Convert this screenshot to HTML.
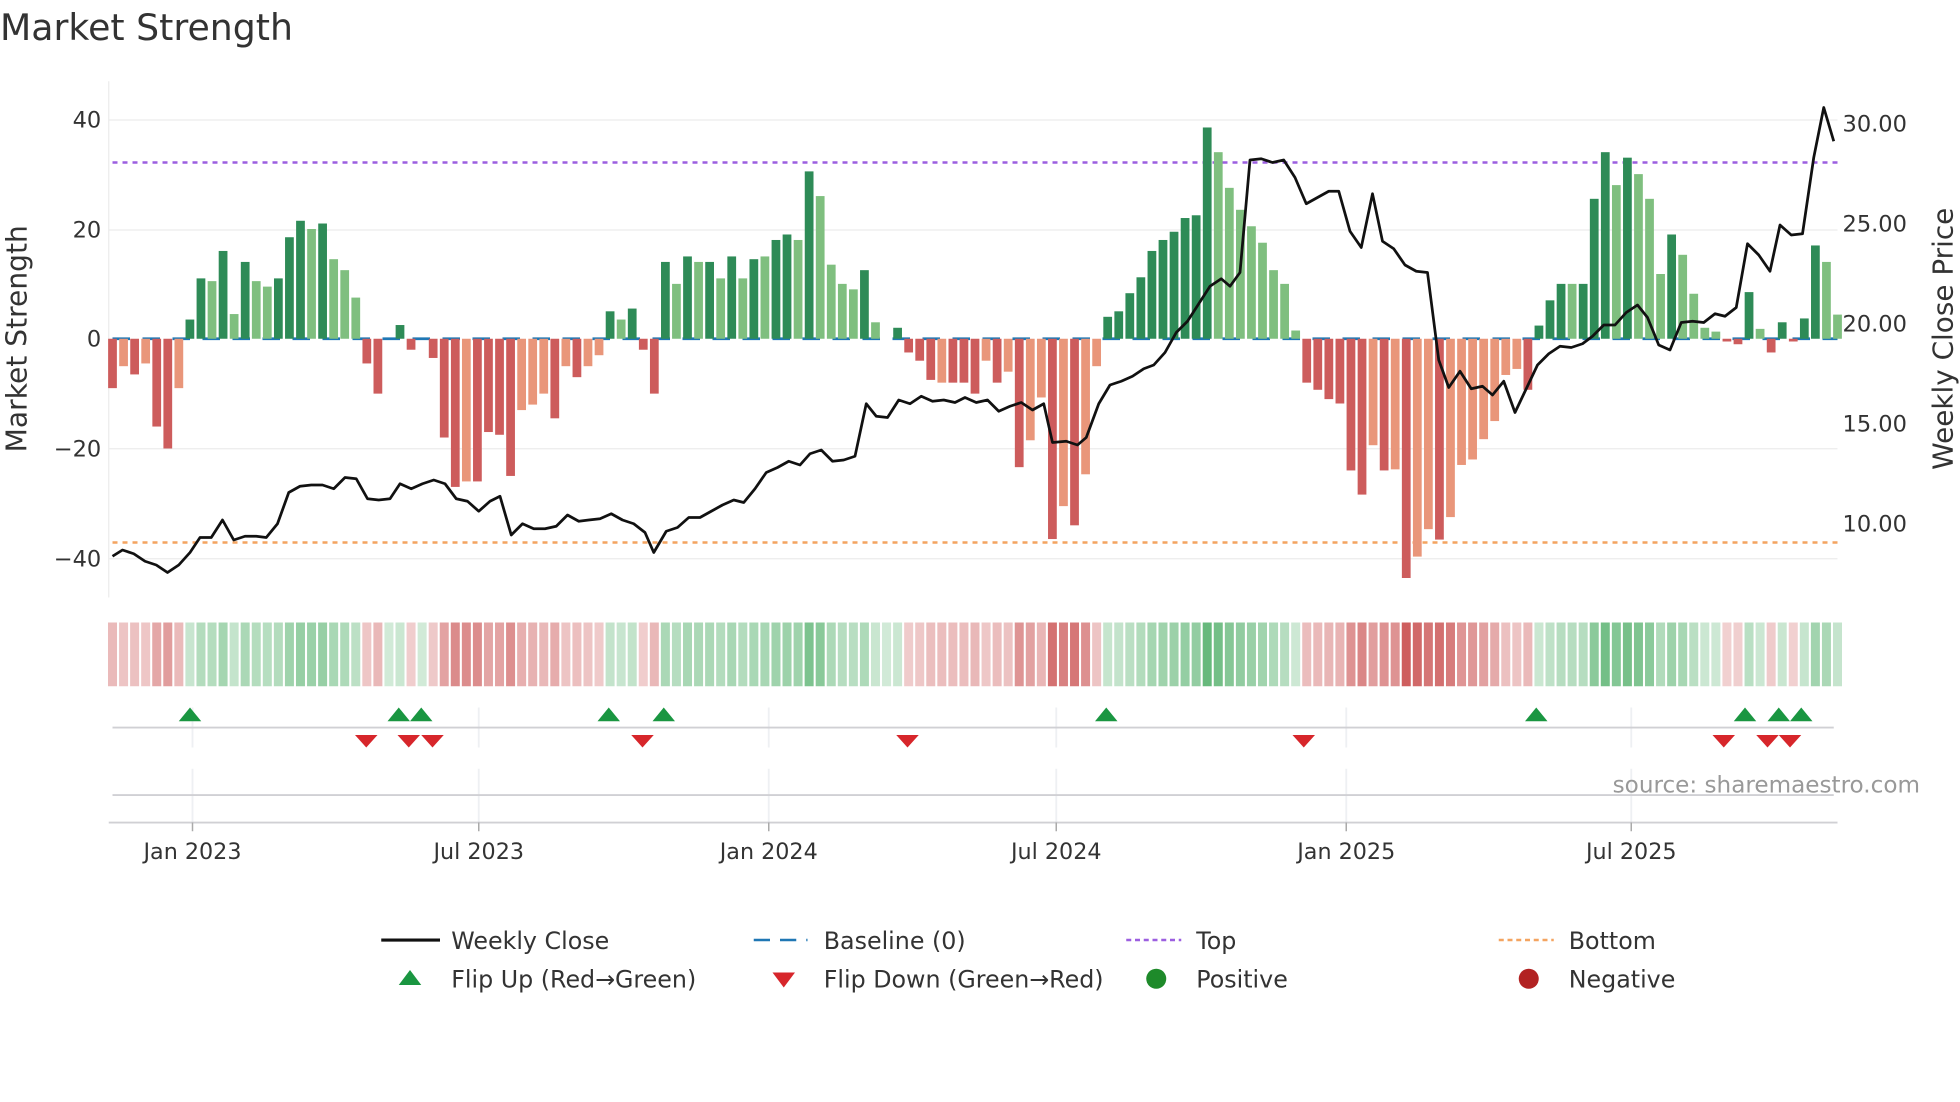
<!DOCTYPE html>
<html><head><meta charset="utf-8"><style>
html,body{margin:0;padding:0;background:#fff;}
svg{display:block;font-family:"DejaVu Sans","Liberation Sans",sans-serif;}
</style></head><body>
<svg id="s" width="1960" height="1102" viewBox="0 0 1568 881.6" xmlns="http://www.w3.org/2000/svg">
<rect width="1568" height="882" fill="#fff"/>
<text x="0" y="32" font-size="29" fill="#333">Market Strength</text>
<g id="grid" stroke="#ececec" stroke-width="1">
<line x1="87" x2="1470" y1="96" y2="96"/><line x1="87" x2="1470" y1="184" y2="184"/>
<line x1="87" x2="1470" y1="359" y2="359"/><line x1="87" x2="1470" y1="447" y2="447"/>
<line x1="87" x2="87" y1="65" y2="478"/>
</g>
<g font-size="18" fill="#333" text-anchor="end">
<text x="81" y="102">40</text><text x="81" y="190">20</text><text x="81" y="277">0</text>
<text x="81" y="365">−20</text><text x="81" y="453">−40</text>
</g>
<g font-size="18" fill="#333">
<text x="1474" y="105">30.00</text><text x="1474" y="185">25.00</text><text x="1474" y="265">20.00</text>
<text x="1474" y="345">15.00</text><text x="1474" y="425">10.00</text>
</g>
<text transform="translate(21,271) rotate(-90)" font-size="22.5" fill="#333" text-anchor="middle">Market Strength</text>
<text transform="translate(1562,271) rotate(-90)" font-size="22.3" fill="#333" text-anchor="middle">Weekly Close Price</text>
<line x1="90" x2="1470" y1="130" y2="130" stroke="#9c5fe0" stroke-width="2" stroke-dasharray="4 4"/>
<line x1="90" x2="1470" y1="434" y2="434" stroke="#f4a460" stroke-width="2" stroke-dasharray="4 4"/>
<line x1="90" x2="1470" y1="271" y2="271" stroke="#1f77b4" stroke-width="2.2" stroke-dasharray="14 10"/>
<g id="bars"></g>
<g id="heat"></g>
<polyline id="price" fill="none" stroke="#111" stroke-width="2.2" stroke-linejoin="round"/>
<g stroke="#eef0f3" stroke-width="1.5">
<line x1="154" x2="154" y1="566" y2="598"/><line x1="383" x2="383" y1="566" y2="598"/><line x1="615" x2="615" y1="566" y2="598"/><line x1="845" x2="845" y1="566" y2="598"/><line x1="1077" x2="1077" y1="566" y2="598"/><line x1="1305" x2="1305" y1="566" y2="598"/>
<line x1="154" x2="154" y1="615" y2="658"/><line x1="383" x2="383" y1="615" y2="658"/><line x1="615" x2="615" y1="615" y2="658"/><line x1="845" x2="845" y1="615" y2="658"/><line x1="1077" x2="1077" y1="615" y2="658"/><line x1="1305" x2="1305" y1="615" y2="658"/>
</g>
<line x1="90" x2="1467" y1="582" y2="582" stroke="#d0d0d4" stroke-width="1.5"/>
<line x1="90" x2="1467" y1="636" y2="636" stroke="#d0d0d4" stroke-width="1.5"/>
<line x1="87" x2="1470" y1="658" y2="658" stroke="#d0d0d4" stroke-width="1.5"/>
<g stroke="#aaa" stroke-width="1.2">
<line x1="154" x2="154" y1="658" y2="665"/><line x1="383" x2="383" y1="658" y2="665"/><line x1="615" x2="615" y1="658" y2="665"/><line x1="845" x2="845" y1="658" y2="665"/><line x1="1077" x2="1077" y1="658" y2="665"/><line x1="1305" x2="1305" y1="658" y2="665"/>
</g>
<g id="flips"></g>
<g font-size="17.8" fill="#333" text-anchor="middle">
<text x="154" y="687">Jan 2023</text><text x="383" y="687">Jul 2023</text><text x="615" y="687">Jan 2024</text>
<text x="845" y="687">Jul 2024</text><text x="1077" y="687">Jan 2025</text><text x="1305" y="687">Jul 2025</text>
</g>
<text x="1536" y="634" font-size="18.5" fill="#999" text-anchor="end">source: sharemaestro.com</text>
<g font-size="19" fill="#333">
<line x1="305" x2="352" y1="752" y2="752" stroke="#111" stroke-width="2.5"/>
<text x="361" y="759">Weekly Close</text>
<line x1="603" x2="646" y1="752" y2="752" stroke="#1f77b4" stroke-width="2" stroke-dasharray="13 8"/>
<text x="659" y="759">Baseline (0)</text>
<line x1="901" x2="945" y1="752" y2="752" stroke="#9c5fe0" stroke-width="2" stroke-dasharray="4 3"/>
<text x="957" y="759">Top</text>
<line x1="1199" x2="1243" y1="752" y2="752" stroke="#f4a460" stroke-width="2" stroke-dasharray="4 3"/>
<text x="1255" y="759">Bottom</text>
<polygon points="319,788 337,788 328,776" fill="#1a9641"/>
<text x="361" y="790">Flip Up (Red→Green)</text>
<polygon points="618,778 636,778 627,790" fill="#d7262b"/>
<text x="659" y="790">Flip Down (Green→Red)</text>
<circle cx="925" cy="783" r="8" fill="#1e8a2a"/>
<text x="957" y="790">Positive</text>
<circle cx="1223" cy="783" r="8" fill="#b22222"/>
<text x="1255" y="790">Negative</text>
</g>
</svg>
<script>
var NS="http://www.w3.org/2000/svg";
var v=[-9,-5,-6.5,-4.5,-16,-20,-9,3.5,11,10.5,16,4.5,14,10.5,9.5,11,18.5,21.5,20,21,14.5,12.5,7.5,-4.5,-10,0,2.5,-2,0,-3.5,-18,-27,-26,-26,-17,-17.5,-25,-13,-12,-10,-14.5,-5,-7,-5,-3,5,3.5,5.5,-2,-10,14,10,15,14,14,11,15,11,14.5,15,18,19,18,30.5,26,13.5,10,9,12.5,3,0,2,-2.5,-4,-7.5,-8,-8,-8,-10,-4,-8,-6,-23.4,-18.5,-10.7,-36.5,-30.5,-34,-24.7,-5,4,5,8.3,11.2,16,18,19.5,22,22.5,38.5,34,27.5,23.5,20.5,17.5,12.5,10,1.5,
-8,-9.3,-11,-11.8,-24,-28.4,-19.4,-24,-23.8,-43.6,-39.7,-34.7,-36.6,-32.5,-23,-22,-18.3,-15,-6.6,-5.5,-9.3,
2.4,7,10,10,10,25.5,34,28,33,30,25.5,11.8,19,15.3,8.2,2,1.3,-0.5,-1,8.5,1.8,-2.5,3,-0.5,3.7,17,14,4.4];
var f="dldlddlddl"+"dldlldddld"+"lllddlddld"+"ddlddddlll"+"dldlldlddd"+"dldldldldl"+"ddldlllldl"+"lddddldddl"+"dldlldldll"+"dddddddddd"+"llllllll"+"ddddddldldlldllllllld"+"dddl"+"dddl"+"dlll"+"dlll"+"lddd"+"lddd"+"ddll";
var n=v.length,x0=90,x1=1470,dx=(x1-x0)/(n-1),sc=4.39,z=271;
var bars=document.getElementById("bars"),heat=document.getElementById("heat");
for(var i=0;i<n;i++){
 var x=x0+i*dx,val=v[i],d=f[i]=="d";
 if(val!=0){var r=document.createElementNS(NS,"rect");
 var h=Math.abs(val)*sc;r.setAttribute("x",x-3.5);r.setAttribute("width",7);
 r.setAttribute("y",val>0?z-h:z);r.setAttribute("height",h);
 r.setAttribute("fill",val>0?(d?"#2e8b57":"#7fbf7f"):(d?"#cd5c5c":"#e9967a"));bars.appendChild(r);}
 var a=0.25+0.65*Math.min(Math.abs(val)/44,1);
 var c=document.createElementNS(NS,"rect");c.setAttribute("x",x-3.6);c.setAttribute("width",7.2);
 c.setAttribute("y",498);c.setAttribute("height",51);
 c.setAttribute("fill",val>=0?"rgb(70,170,95)":"rgb(200,75,75)");c.setAttribute("fill-opacity",a);heat.appendChild(c);
}
var p="90,445 98,440 107,443 116,449 125,452 134,458 143,452 152,442 160,430 169,430 178,416 187,432 196,429 205,429 213,430 222,419 231,394 240,389 249,388 258,388 267,391 276,382 285,383 294,399 303,400 312,399 320,387 329,391 338,387 347,384 356,387 365,399 374,401 383,409 392,401 400,397 409,428 418,419 427,423 436,423 445,421 454,412 463,417 471,416 480,415 489,411 498,416 507,419 516,426 523,442 533,425 542,422 551,414 560,414 569,409 578,404 587,400 595,402 604,391 613,378 622,374 631,369 640,372 648,363 657,360 666,369 675,368 684,365 693,323 701,333 710,334 719,320 728,323 737,317 746,321 755,320 764,322 772,318 781,322 790,320 799,329 808,325 817,322 826,328 835,323 842,354 853,353 862,356 869,350 879,323 888,308 897,305 906,301 915,295 923,292 932,282 941,266 950,257 959,243 968,229 977,223 984,229 992,218 1000,128 1009,127 1018,130 1027,128 1036,142 1045,163 1054,158 1063,153 1071,153 1080,185 1089,198 1098,155 1106,193 1115,199 1124,212 1133,217 1142,218 1151,288 1159,310 1168,297 1177,311 1186,309 1194,316 1203,305 1212,330 1221,311 1230,292 1239,283 1248,277 1257,278 1266,275 1274,269 1283,260 1292,260 1301,250 1310,244 1318,254 1327,276 1336,280 1345,258 1354,257 1363,258 1372,251 1380,253 1389,246 1398,195 1407,204 1416,217 1424,180 1433,188 1442,187 1451,126 1459,86 1467,113";
document.getElementById("price").setAttribute("points",p);
var fl=document.getElementById("flips");
[152,319,337,487,531,885,1229,1396,1423,1441].forEach(function(x){var t=document.createElementNS(NS,"polygon");
t.setAttribute("points",(x-9)+",577 "+(x+9)+",577 "+x+",566");t.setAttribute("fill","#1a9641");fl.appendChild(t);});
[293,327,346,514,726,1043,1379,1414,1432].forEach(function(x){var t=document.createElementNS(NS,"polygon");
t.setAttribute("points",(x-9)+",588 "+(x+9)+",588 "+x+",598");t.setAttribute("fill","#d7262b");fl.appendChild(t);});
</script>
</body></html>
